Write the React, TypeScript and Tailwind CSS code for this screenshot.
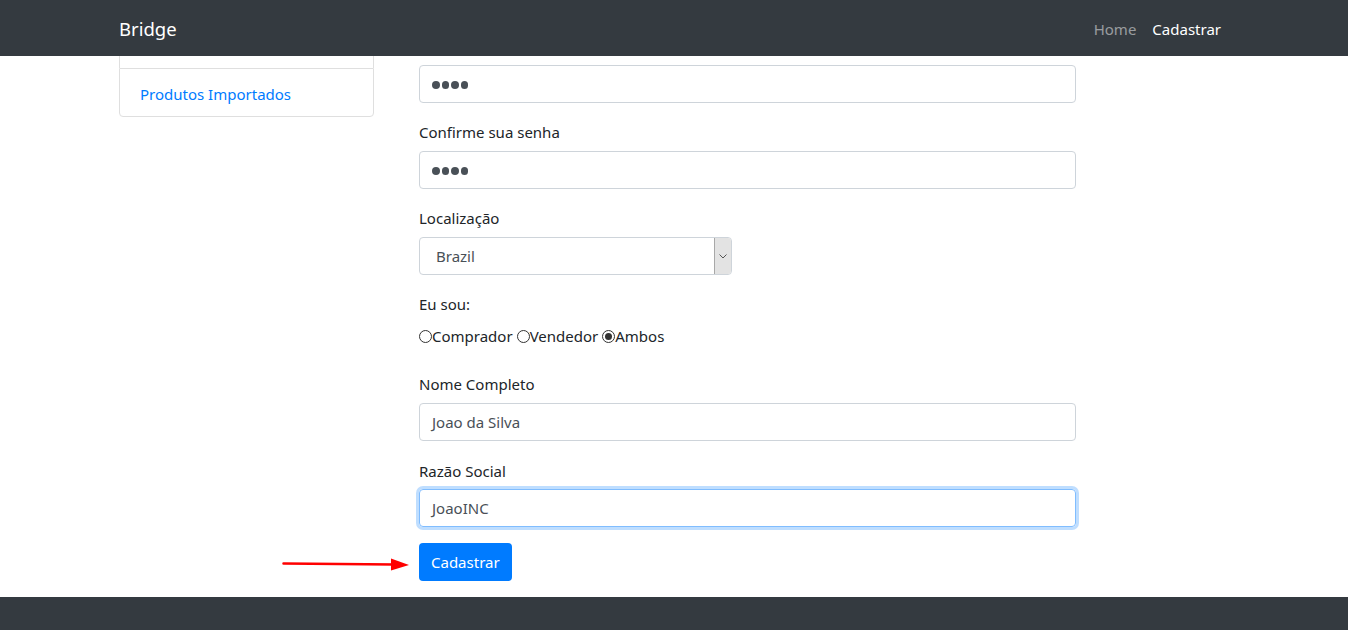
import React from "react";

const font = { fontFamily: '"Noto Sans", "Liberation Sans", sans-serif' };

function Dots() {
  return (
    <span className="inline-flex items-center gap-[2px] translate-y-[1px]">
      {[0, 1, 2, 3].map((i) => (
        <span key={i} className="w-[7.5px] h-[7.5px] rounded-full bg-[#495057]" />
      ))}
    </span>
  );
}

function Radio({ checked }: { checked?: boolean }) {
  return (
    <span className="inline-flex items-center justify-center w-[13px] h-[13px] rounded-full border border-[#333] bg-white">
      {checked && <span className="w-[7px] h-[7px] rounded-full bg-[#333]" />}
    </span>
  );
}

export default function App() {
  return (
    <div className="w-[1360px] h-[630px] bg-white overflow-hidden text-[15px] text-[#212529]" style={font}>
      <div className="w-[1348px] h-[630px] flex flex-col">
        <nav className="h-[56px] bg-[#343a40] flex items-center justify-between pl-[119px] pr-[127px] shrink-0">
          <span className="text-[18.5px] text-white translate-y-[1px]">Bridge</span>
          <div className="flex items-center gap-[16px] translate-y-[1px]">
            <span className="text-white/50">Home</span>
            <span className="text-white">Cadastrar</span>
          </div>
        </nav>
        <div className="flex flex-1 pl-[119px]">
          <div className="w-[255px] shrink-0">
            <div className="h-[12px] border-x border-[#dfdfdf]" />
            <div className="h-[49px] border border-[#dfdfdf] rounded-b-[4px] flex items-center px-[20px] pt-[3px] text-[#007bff]">
              Produtos Importados
            </div>
          </div>
          <div className="ml-[45px] w-[657px] pt-[9px]">
            <div className="h-[38px] border border-[#ced4da] rounded-[4px] flex items-center px-[12px]">
              <Dots />
            </div>
            <div className="mt-[16px] h-[24px] leading-[24px] pt-[1px]">Confirme sua senha</div>
            <div className="mt-[8px] h-[38px] border border-[#ced4da] rounded-[4px] flex items-center px-[12px]">
              <Dots />
            </div>
            <div className="mt-[16px] h-[24px] leading-[24px] pt-[1px]">Localização</div>
            <div className="mt-[8px] w-[313px] h-[38px] border border-[#ced4da] rounded-[4px] flex items-center">
              <span className="flex-1 pl-[16px] pt-[1px] text-[#495057]">Brazil</span>
              <span className="w-[17px] h-[36px] bg-[#e3e3e3] border-l border-[#a8a8a8] flex items-center justify-center rounded-r-[3px]">
                <svg width="8" height="5" viewBox="0 0 8 5">
                  <path d="M0.5 0.5 L4 4 L7.5 0.5" fill="none" stroke="#555" strokeWidth="1" />
                </svg>
              </span>
            </div>
            <div className="mt-[16px] h-[24px] leading-[24px] pt-[1px]">Eu sou:</div>
            <div className="mt-[9px] h-[24px] leading-[24px] flex items-center">
              <Radio />
              <span>Comprador</span>
              <span className="w-[4px]" />
              <Radio />
              <span>Vendedor</span>
              <span className="w-[4px]" />
              <Radio checked />
              <span>Ambos</span>
            </div>
            <div className="mt-[23px] h-[24px] leading-[24px] pt-[1px]">Nome Completo</div>
            <div className="mt-[8px] h-[38px] border border-[#ced4da] rounded-[4px] flex items-center px-[12px] pt-[1px] text-[#495057]">
              Joao da Silva
            </div>
            <div className="mt-[17px] h-[24px] leading-[24px] pt-[1px]">Razão Social</div>
            <div className="mt-[7px] h-[38px] border border-[#80bdff] rounded-[4px] flex items-center px-[12px] pt-[1px] text-[#495057] shadow-[0_0_0_3px_rgba(0,123,255,0.25)]">
              JoaoINC
            </div>
            <div className="mt-[16px] flex items-center relative">
              <svg className="absolute left-[-137px] top-[14px]" width="130" height="14" viewBox="0 0 130 14">
                <path d="M1.5 6.5 L112 7.5" stroke="#ff0000" strokeWidth="2.5" strokeLinecap="round" />
                <path d="M109 1.5 L127 8 L109 13.5 Z" fill="#ff0000" />
              </svg>
              <button className="h-[38px] px-[12px] pt-[1px] rounded-[4px] bg-[#007bff] text-white">Cadastrar</button>
            </div>
          </div>
        </div>
        <footer className="h-[33px] bg-[#343a40] shrink-0" />
      </div>
    </div>
  );
}
